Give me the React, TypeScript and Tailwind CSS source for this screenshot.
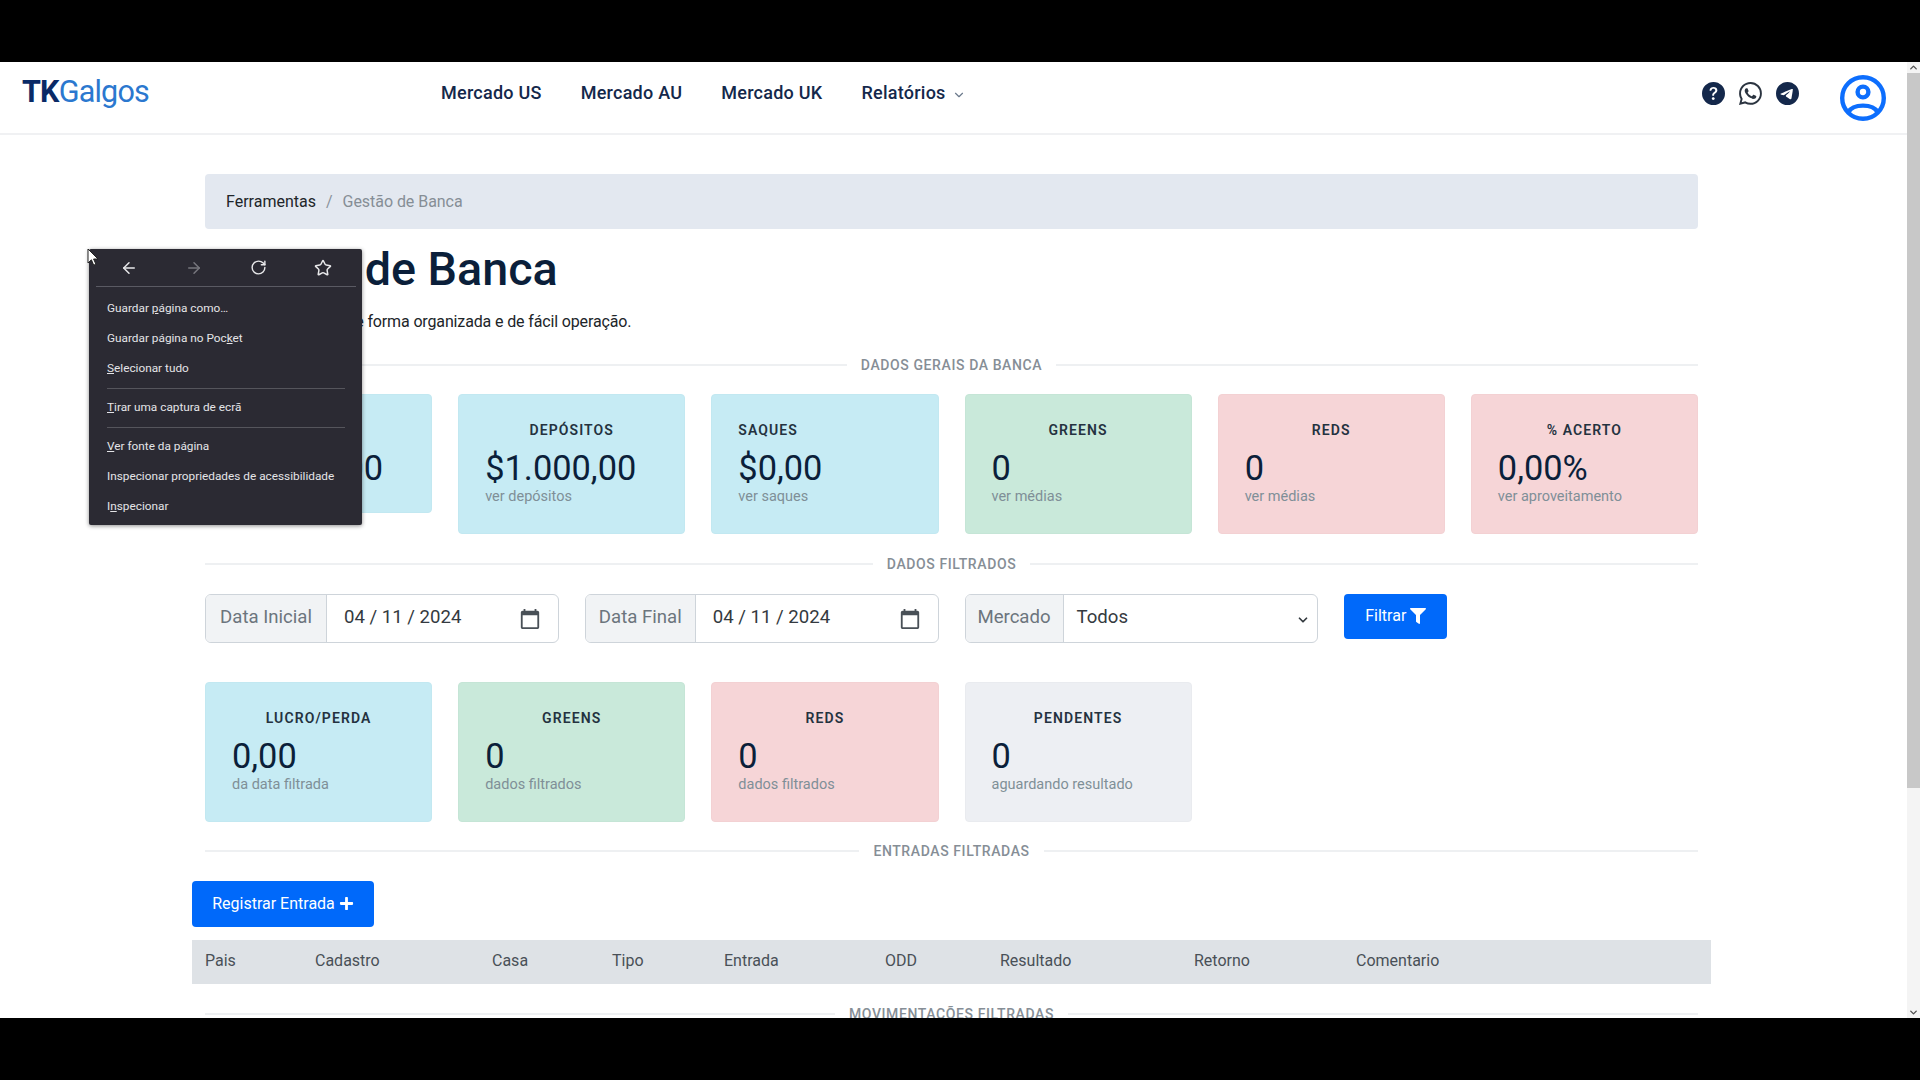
import { BsQuestionCircleFill, BsWhatsapp, BsTelegram } from "react-icons/bs";
import { FaFilter, FaPlus } from "react-icons/fa";
import { LuArrowLeft, LuArrowRight, LuChevronDown, LuChevronUp, LuRotateCw, LuStar } from "react-icons/lu";

type CardProps = { title: string; value: string; note?: string; tone: string; left?: boolean };

function StatCard({ title, value, note, tone, left }: CardProps) {
  return (
    <div className={`rounded border px-[26px] pt-[25px] pb-[24px] ${tone}`}>
      <div className={`text-[14px] leading-5 font-semibold tracking-[1.1px] text-[#24323f] ${left ? "text-left" : "text-center"}`}>{title}</div>
      <div className="mt-[8px] text-[34.4px] leading-10 text-[#0b1f3a]">{value}</div>
      {note && <div className="-mt-[2px] mb-[1px] text-[14.5px] leading-[22px] text-[#7f8f97]">{note}</div>}
    </div>
  );
}

function Divider({ label, className }: { label: string; className: string }) {
  return (
    <div className={`flex h-5 items-center gap-[14px] ${className}`}>
      <div className="h-0.5 flex-1 bg-[#eef0f2]" />
      <div className="text-[14px] font-medium tracking-[0.6px] text-[#868e96]">{label}</div>
      <div className="h-0.5 flex-1 bg-[#eef0f2]" />
    </div>
  );
}

function CalendarGlyph() {
  return (
    <svg viewBox="0 0 24 24" className="h-[22px] w-[22px] fill-[#495057]">
      <path d="M20 3h-1V1h-2v2H7V1H5v2H4c-1.1 0-2 .9-2 2v16c0 1.1.9 2 2 2h16c1.1 0 2-.9 2-2V5c0-1.1-.9-2-2-2zm0 18H4V8h16v13z" />
    </svg>
  );
}

function UserAvatar() {
  return (
    <svg viewBox="-23 -23 46 46" className="mt-[13px] mr-[21px] ml-[41px] h-[46px] w-[46px] fill-none stroke-[#0d6efd] stroke-[4.4px]">
      <circle r="20.8" />
      <circle cy="-6" r="5.4" />
      <path d="M-14.5 14 C-10 5.5 10 5.5 14.5 14" />
    </svg>
  );
}

function DateField({ label, labelWidth }: { label: string; labelWidth: string }) {
  return (
    <div className="flex h-[49px] overflow-hidden rounded-md border border-[#ced4da] text-[18.6px]">
      <div className={`flex items-center justify-center border-r border-[#ced4da] bg-[#f1f3f5] pb-[2px] text-[#6c757d] ${labelWidth}`}>{label}</div>
      <div className="flex flex-1 items-center justify-between pr-[17px] pl-[17px] text-[#343a40]">
        <span className="pb-[2px]">04 / 11 / 2024</span>
        <CalendarGlyph />
      </div>
    </div>
  );
}

function MenuItem({ before, keyLetter, after }: { before: string; keyLetter: string; after: string }) {
  return (
    <div className="flex h-[30px] items-center pl-[17px] text-[11.8px] text-[#e4e4e7]">
      <span className="whitespace-pre">
        {before}
        <span className="underline">{keyLetter}</span>
        {after}
      </span>
    </div>
  );
}

const columns = [
  ["Pais", "w-[110px]"],
  ["Cadastro", "w-[177px]"],
  ["Casa", "w-[120px]"],
  ["Tipo", "w-[112px]"],
  ["Entrada", "w-[161px]"],
  ["ODD", "w-[115px]"],
  ["Resultado", "w-[194px]"],
  ["Retorno", "w-[162px]"],
  ["Comentario", ""],
];

export default function App() {
  return (
    <div className="relative flex h-screen flex-col overflow-hidden bg-black font-['Roboto',sans-serif]">
      <div className="h-[62px] shrink-0 bg-black" />

      <div className="flex h-[956px] shrink-0 overflow-hidden bg-white">
        <div className="min-w-0 flex-1">
          <header className="flex h-[73px] items-start border-b-2 border-[#f0f1f3] pl-[22px]">
            <div className="mt-[12px] w-[419px] text-[30.5px] leading-9 tracking-[-0.8px]">
              <span className="font-bold text-[#0a2a66]">TK</span>
              <span className="text-[#2b78cf]">Galgos</span>
            </div>
            <nav className="mt-[20px] flex gap-[39px] text-[18px] leading-[22px] font-medium tracking-[0.25px] text-[#14284b]">
              <span>Mercado US</span>
              <span>Mercado AU</span>
              <span>Mercado UK</span>
              <span className="flex items-center gap-[6px]">
                Relatórios
                <LuChevronDown className="mt-1 h-[14px] w-[14px] text-[#6c7a8c]" />
              </span>
            </nav>
            <div className="ml-auto mt-[20px] flex items-center gap-[14px] text-[#14284b]">
              <BsQuestionCircleFill className="h-[23px] w-[23px]" />
              <BsWhatsapp className="h-[23px] w-[23px] text-[#2b3440]" />
              <BsTelegram className="h-[23px] w-[23px]" />
            </div>
            <UserAvatar />
          </header>

          <main className="mr-[209px] ml-[205px]">
            <div className="mt-[39px] flex h-[55px] items-center gap-[10px] rounded bg-[#e3e8f0] px-[21px] text-[16px]">
              <span className="text-[#212529]">Ferramentas</span>
              <span className="text-[#8a939c]">/</span>
              <span className="tracking-[-0.05px] text-[#868e96]">Gestão de Banca</span>
            </div>

            <h1 className="mt-[10px] text-[46.7px] leading-[60px] font-medium text-[#0b1f3a]">Gestão de Banca</h1>
            <p className="mt-[11px] text-[16px] leading-6 tracking-[-0.14px] text-[#212529]">Gerencie sua banca de forma organizada e de fácil operação.</p>

            <Divider label="DADOS GERAIS DA BANCA" className="mt-[21px]" />

            <div className="mt-[19px] grid grid-cols-6 items-start gap-[26px]">
              <StatCard title="BANCA" value="$1.000,00" tone="bg-[#c6ebf4] border-[#c2e8f1]" />
              <StatCard title="DEPÓSITOS" value="$1.000,00" note="ver depósitos" tone="bg-[#c6ebf4] border-[#c2e8f1]" />
              <StatCard title="SAQUES" value="$0,00" note="ver saques" tone="bg-[#c6ebf4] border-[#c2e8f1]" left />
              <StatCard title="GREENS" value="0" note="ver médias" tone="bg-[#c9e9da] border-[#c5e5d6]" />
              <StatCard title="REDS" value="0" note="ver médias" tone="bg-[#f6d5d7] border-[#f3d1d3]" />
              <StatCard title="% ACERTO" value="0,00%" note="ver aproveitamento" tone="bg-[#f6d5d7] border-[#f3d1d3]" />
            </div>

            <Divider label="DADOS FILTRADOS" className="mt-[20px]" />

            <div className="mt-[20px] grid grid-cols-4 items-start gap-[26px]">
              <DateField label="Data Inicial" labelWidth="w-[121px]" />
              <DateField label="Data Final" labelWidth="w-[110px]" />
              <div className="flex h-[49px] overflow-hidden rounded-md border border-[#ced4da] text-[18.6px]">
                <div className="flex w-[98px] items-center justify-center border-r border-[#ced4da] bg-[#f1f3f5] pb-[2px] text-[#6c757d]">Mercado</div>
                <div className="flex flex-1 items-center justify-between pr-[7px] pl-[13px] text-[#343a40]">
                  <span className="pb-[2px]">Todos</span>
                  <LuChevronDown className="mt-0.5 h-[14px] w-[14px] stroke-[3px]" />
                </div>
              </div>
              <button className="flex h-[45px] w-[103px] items-center justify-center gap-1 rounded bg-[#0069fa] pb-[2px] text-[16px] text-white">
                Filtrar
                <FaFilter className="h-4 w-4" />
              </button>
            </div>

            <div className="mt-[39px] grid grid-cols-6 items-start gap-[26px]">
              <StatCard title="LUCRO/PERDA" value="0,00" note="da data filtrada" tone="bg-[#c6ebf4] border-[#c2e8f1]" />
              <StatCard title="GREENS" value="0" note="dados filtrados" tone="bg-[#c9e9da] border-[#c5e5d6]" />
              <StatCard title="REDS" value="0" note="dados filtrados" tone="bg-[#f6d5d7] border-[#f3d1d3]" />
              <StatCard title="PENDENTES" value="0" note="aguardando resultado" tone="bg-[#edeff3] border-[#e9ebef]" />
            </div>

            <Divider label="ENTRADAS FILTRADAS" className="mt-[19px]" />

            <div className="-mx-[13px]">
              <button className="mt-[20px] flex h-[46px] w-[182px] items-center justify-center gap-1 rounded bg-[#0069fa] pb-[1px] text-[16px] text-white">
                Registrar Entrada
                <FaPlus className="h-[15px] w-[15px]" />
              </button>
              <table className="mt-[13px] w-full table-fixed">
                <thead>
                  <tr className="h-[44px] bg-[#dee2e6] text-[16px] text-[#495057]">
                    {columns.map(([name, width]) => (
                      <th key={name} className={`pb-[2px] pl-[13px] text-left font-normal ${width}`}>
                        {name}
                      </th>
                    ))}
                  </tr>
                </thead>
              </table>
            </div>

            <Divider label="MOVIMENTAÇÕES FILTRADAS" className="mt-[20px]" />
          </main>
        </div>

        {/* Window scrollbar */}
        <div className="flex w-[13px] shrink-0 flex-col items-center justify-between bg-[#f4f4f4]">
          <div className="flex h-[11px] items-center">
            <LuChevronUp className="h-[11px] w-[11px] stroke-[3px] text-[#505050]" />
          </div>
          <div className="mb-[219px] h-[715px] w-full bg-[#c8c8c8]" />
          <div className="flex h-[11px] items-center">
            <LuChevronDown className="h-[11px] w-[11px] stroke-[3px] text-[#505050]" />
          </div>
        </div>
      </div>

      <div className="flex-1 bg-black" />

      {/* Browser context menu open over the page */}
      <div className="absolute top-[249px] left-[89px] w-[273px] rounded-[2px] bg-[#2b2a33] pb-[3px] pl-px shadow-[0_1px_4px_rgba(0,0,0,0.45)]">
        <div className="mx-[6px] flex h-[38px] items-center justify-between border-b border-[#5a5a63] px-[24px]">
          <LuArrowLeft className="h-[18px] w-[18px] text-[#e8e8ea]" />
          <LuArrowRight className="h-[18px] w-[18px] text-[#77777e]" />
          <LuRotateCw className="h-[17px] w-[17px] text-[#e8e8ea]" />
          <LuStar className="h-[18px] w-[18px] text-[#e8e8ea]" />
        </div>
        <div className="pt-[7px]">
          <MenuItem before="Guardar " keyLetter="p" after="ágina como…" />
          <MenuItem before="Guardar página no Poc" keyLetter="k" after="et" />
          <MenuItem before="" keyLetter="S" after="elecionar tudo" />
          <div className="mx-[17px] my-[4px] h-px bg-[#55555c]" />
          <MenuItem before="" keyLetter="T" after="irar uma captura de ecrã" />
          <div className="mx-[17px] my-[4px] h-px bg-[#55555c]" />
          <MenuItem before="" keyLetter="V" after="er fonte da página" />
          <MenuItem before="Inspecionar propriedades de acessibilidade" keyLetter="" after="" />
          <MenuItem before="I" keyLetter="n" after="specionar" />
        </div>
      </div>

      {/* Mouse pointer */}
      <svg viewBox="0 0 12 19" className="absolute top-[248px] left-[87px] h-[19px] w-[12px]">
        <path d="M1 1v14l3.4-3.2 2.3 5.4 2.2-1-2.3-5.2H11z" fill="#fff" stroke="#222" strokeWidth="1" />
      </svg>
    </div>
  );
}
